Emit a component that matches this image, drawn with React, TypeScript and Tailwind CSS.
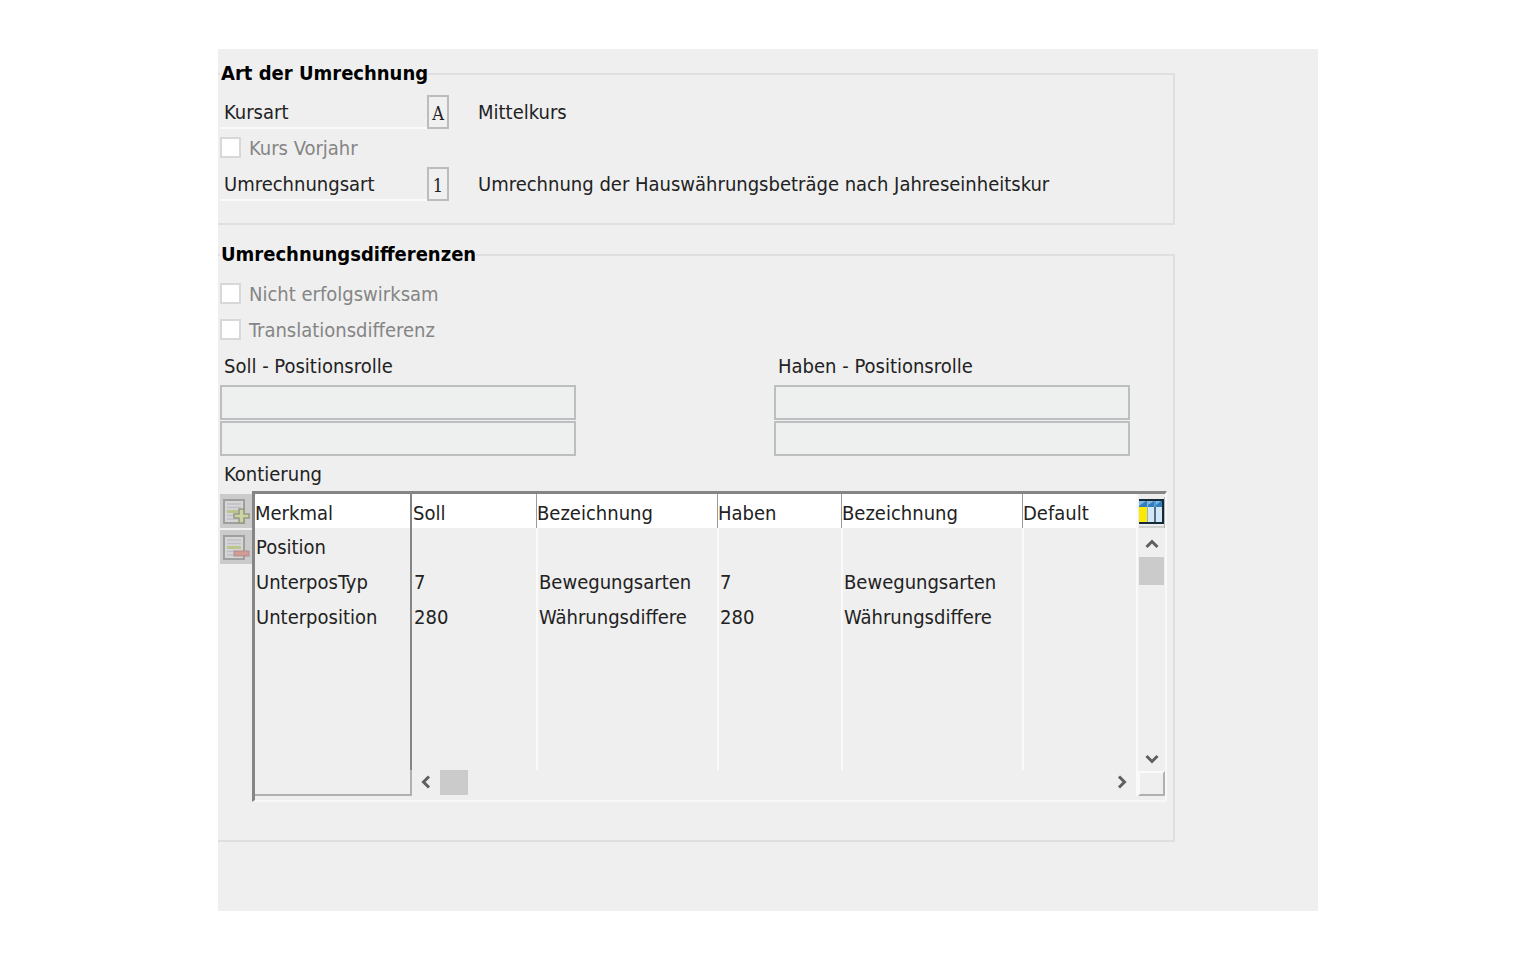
import React from "react";

interface PostingRow {
  feature: string;
  debit?: string;
  debitText?: string;
  credit?: string;
  creditText?: string;
}

const columns = [
  {label: "Merkmal", className: "w-[157px] border-r-2 border-[#858585]"},
  {label: "Soll", className: "w-[124px] pl-px"},
  {label: "Bezeichnung", className: "w-[181px] border-l border-[#9a9a9a]"},
  {label: "Haben", className: "w-[124px] border-l border-[#9a9a9a]"},
  {label: "Bezeichnung", className: "w-[181px] border-l border-[#9a9a9a]"},
  {label: "Default", className: "border-l border-[#9a9a9a]"},
];

const rows: PostingRow[] = [
  {feature: "Position"},
  {feature: "UnterposTyp", debit: "7", debitText: "Bewegungsarten", credit: "7", creditText: "Bewegungsarten"},
  {feature: "Unterposition", debit: "280", debitText: "Währungsdiffere", credit: "280", creditText: "Währungsdiffere"},
];

interface GroupProps {
  title: string
  className: string
  children: React.ReactNode
}

function Group(props: GroupProps) {
  return (
    <fieldset className={`w-full max-w-[957px] border-2 border-l-0 border-[#dfdfdf] pl-0.5 ${props.className}`}>
      <legend className="h-[26px] pl-px text-xl leading-6 font-bold text-black">{props.title}</legend>
      {props.children}
    </fieldset>
  );
}

interface CodeFieldProps {
  id: string
  label: string
  value: string
  description: string
}

function CodeField(props: CodeFieldProps) {
  return (
    <div className="flex h-9 items-center">
      <label htmlFor={props.id} className="h-[34px] w-[207px] border-b-2 border-[#fafafa] pl-1 leading-[34px]">
        {props.label}
      </label>
      <input
        id={props.id}
        readOnly
        defaultValue={props.value}
        className="h-[34px] w-[22px] border-2 border-[#bcbcbc] bg-[#f0f0f0] pt-0.5 text-center font-['DejaVu_Serif_Condensed','DejaVu_Serif',serif] text-lg outline-none"
      />
      <span className="ml-[29px]">{props.description}</span>
    </div>
  );
}

function CheckField(props: { label: string }) {
  return (
    <label className="flex h-9 items-center gap-2 text-[#858585]">
      <input
        type="checkbox"
        disabled
        className="mb-0.5 size-[21px] appearance-none border-2 border-[#d8d8d8] bg-white"
      />
      {props.label}
    </label>
  );
}

function RoleField(props: { label: string }) {
  return (
    <div className="w-[356px]">
      <div className="h-9 pl-1 leading-9">{props.label}</div>
      <div className="flex flex-col gap-px pt-px">
        <input
          aria-label={`${props.label} 1`}
          readOnly
          className="h-[35px] w-full border-2 border-[#bcbebf] bg-[#eeefef] px-1 outline-none"
        />
        <input
          aria-label={`${props.label} 2`}
          readOnly
          className="h-[35px] w-full border-2 border-[#bcbebf] bg-[#eeefef] px-1 outline-none"
        />
      </div>
    </div>
  );
}

function RowIcon(props: { kind: "insert" | "delete" }) {
  return (
    <svg viewBox="0 0 32 34" className="h-[34px] w-8" fill="none">
      <rect x="4" y="6" width="20" height="23" fill="#d6d6d6" stroke="#9f9f9f" strokeWidth="2"/>
      <path d="M7 10h14M7 13.5h14M7 21.5h11M7 25h11" stroke="#bfbfc6" strokeWidth="1.5"/>
      <path d="M7 17.5h14" stroke="#bcc68c" strokeWidth="3"/>
      {props.kind === "insert"
        ? <path d="M19 15h5v5h5v4h-5v5h-5v-5h-5v-4h5z" fill="#ccd3a4" stroke="#969a83" strokeWidth="1.5"/>
        : <rect x="14" y="21" width="15" height="5" fill="#d49a96" stroke="#ab8f8d"/>}
    </svg>
  );
}

function ConfigIcon() {
  return (
    <svg viewBox="0 0 26 34" className="h-[34px] w-[26px]" fill="none">
      <path d="M0 0h26v34h-26z" fill="#ececec"/>
      <path d="M0 33h26M25.5 3v31" stroke="#b5b5b5"/>
      <path d="M0 5h25v25h-25z" fill="#152a38"/>
      <path d="M0 7h23v6h-23z" fill="#2f7fc0"/>
      <path d="M0 7h7l-7 5zM9 7h6l-6 4zM17 7h5l-5 4z" fill="#7db8e4"/>
      <path d="M0 13h8v15h-8z" fill="#fbe905"/>
      <path d="M9 13h6v15h-6zM17 13h6v15h-6z" fill="#d3e7f7"/>
      <path d="M8.5 7v21M16 7v21" stroke="#8fb4d0"/>
    </svg>
  );
}

const arrows = {
  up: "M2.5 11 8 5.5l5.5 5.5",
  down: "M2.5 5 8 10.5l5.5-5.5",
  left: "M11 2.5 5.5 8l5.5 5.5",
  right: "M5 2.5l5.5 5.5-5.5 5.5",
};

function Arrow(props: { direction: keyof typeof arrows }) {
  return (
    <svg viewBox="0 0 16 16" className="size-4" fill="none">
      <path d={arrows[props.direction]} stroke="#5f5f5f" strokeWidth="3"/>
    </svg>
  );
}

function PostingTable() {
  const bodyCell = "border-l-2 border-[#fafafa] p-0 pt-[3px] pl-px";

  return (
    <table className="h-[276px] w-full table-fixed border-separate border-spacing-0 text-left whitespace-nowrap">
      <thead>
        <tr className="h-[34px] bg-white">
          {columns.map((column, index) => (
            <th key={index} className={`pt-1 font-normal ${column.className}`}>{column.label}</th>
          ))}
        </tr>
      </thead>
      <tbody>
        {rows.map((row) => (
          <tr key={row.feature} className="h-[35px]">
            <td className="border-r-2 border-[#858585] p-0 pt-[3px] pl-px">{row.feature}</td>
            <td className="p-0 pt-[3px] pl-0.5">{row.debit}</td>
            <td className={bodyCell}>{row.debitText}</td>
            <td className={bodyCell}>{row.credit}</td>
            <td className={bodyCell}>{row.creditText}</td>
            <td className={bodyCell}/>
          </tr>
        ))}
        <tr>
          <td className="border-r-2 border-[#858585]"/>
          <td/>
          <td className={bodyCell}/>
          <td className={bodyCell}/>
          <td className={bodyCell}/>
          <td className={bodyCell}/>
        </tr>
      </tbody>
    </table>
  );
}

function PostingPanel() {
  return (
    <div className="mr-1.5 flex items-start">
      <div className="flex flex-col gap-0.5 pt-[3px]">
        <button type="button" aria-label="Zeile einfügen" className="bg-[#cbcbcb]"><RowIcon kind="insert"/></button>
        <button type="button" aria-label="Zeile löschen" className="bg-[#cbcbcb]"><RowIcon kind="delete"/></button>
      </div>
      <div className="flex min-w-0 flex-1 border-t-3 border-r-2 border-b-2 border-l-3 border-t-[#858585] border-r-[#f8f8f8] border-b-[#f8f8f8] border-l-[#858585] pb-1">
        <div className="min-w-0 flex-1">
          <PostingTable/>
          <div className="flex h-[26px]">
            <div className="w-[157px] border-r-2 border-b-2 border-[#b0b0b0]"/>
            <div className="flex flex-1 items-center justify-between px-1.5 pb-0.5">
              <div className="flex items-center gap-1.5">
                <button type="button" aria-label="Nach links"><Arrow direction="left"/></button>
                <div className="h-[25px] w-7 bg-[#cbcbcb]"/>
              </div>
              <button type="button" aria-label="Nach rechts"><Arrow direction="right"/></button>
            </div>
          </div>
        </div>
        <div className="flex w-[29px] flex-col items-center border-l-2 border-[#fafafa]">
          <button type="button" aria-label="Konfiguration"><ConfigIcon/></button>
          <button type="button" aria-label="Nach oben" className="mt-2 mb-[5px]"><Arrow direction="up"/></button>
          <div className="h-7 w-[25px] bg-[#cbcbcb]"/>
          <button type="button" aria-label="Nach unten" className="mt-auto mb-1"><Arrow direction="down"/></button>
          <div className="h-[25px] w-full border-2 border-t-[#fafafa] border-r-[#b0b0b0] border-b-[#b0b0b0] border-l-[#fafafa]"/>
        </div>
      </div>
    </div>
  );
}

export default function App() {
  return (
    <main className="flex min-h-screen justify-center bg-white px-10 py-[49px] font-['DejaVu_Sans_Condensed','DejaVu_Sans',sans-serif] text-xl text-[#222]">
      <form className="w-full max-w-[1100px] bg-[#efefef] pt-3">
        <Group title="Art der Umrechnung" className="pb-[21px]">
          <div className="pt-[7px]">
            <CodeField id="kursart" label="Kursart" value="A" description="Mittelkurs"/>
            <CheckField label="Kurs Vorjahr"/>
            <CodeField
              id="umrechnungsart"
              label="Umrechnungsart"
              value="1"
              description="Umrechnung der Hauswährungsbeträge nach Jahreseinheitskur"
            />
          </div>
        </Group>
        <Group title="Umrechnungsdifferenzen" className="mt-[17px] pb-[38px]">
          <div className="pt-2">
            <CheckField label="Nicht erfolgswirksam"/>
            <CheckField label="Translationsdifferenz"/>
            <div className="flex gap-[198px]">
              <RoleField label="Soll - Positionsrolle"/>
              <RoleField label="Haben - Positionsrolle"/>
            </div>
            <div className="h-[35px] pl-1 leading-9">Kontierung</div>
            <PostingPanel/>
          </div>
        </Group>
      </form>
    </main>
  );
}
